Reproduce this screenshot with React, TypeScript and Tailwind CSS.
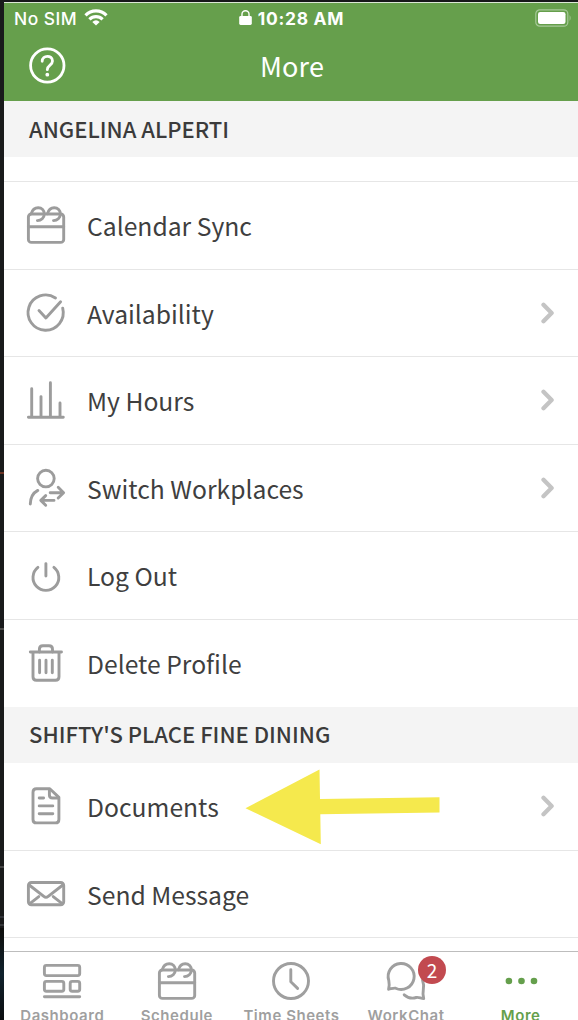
import type { ReactNode } from "react";

const humanist = "font-['Noto_Sans_CJK_SC','Noto_Sans',sans-serif]";

function Icon({ children }: { children: ReactNode }) {
  return (
    <svg
      viewBox="0 0 40 40"
      className="size-10 shrink-0 overflow-visible"
      fill="none"
      stroke="currentColor"
      strokeWidth="2.9"
      strokeLinecap="round"
      strokeLinejoin="round"
    >
      {children}
    </svg>
  );
}

const CalendarIcon = () => (
  <Icon>
    <rect x="2.4" y="9" width="35.3" height="28.4" rx="3" />
    <path d="M2.4 21.7H37.7" />
    <path d="M5.2 8.8C6.4 4.5 9 2.7 12.2 2.7C15.8 2.7 18.3 5.6 18.3 9C18.3 12.8 15.2 15.6 11.4 15.6" />
    <path d="M21.4 8.8C22.6 4.5 25 2.7 28.2 2.7C31.8 2.7 34.4 5.6 34.4 9C34.4 12.8 31.3 15.6 27.5 15.6" />
  </Icon>
);

const CheckIcon = () => (
  <Icon>
    <path d="M29.5 5A17.6 17.6 0 1 0 36.7 15.2" />
    <path d="M13 17.6L19.9 24.9L34.6 8.8" />
  </Icon>
);

const BarsIcon = () => (
  <Icon>
    <path d="M2.4 37.2H37.3M5.7 36V8.8M15 36V16.6M24.4 36V2.7M34 36V23" />
  </Icon>
);

const SwitchIcon = () => (
  <Icon>
    <circle cx="19.9" cy="10.6" r="8.3" />
    <path d="M4.3 36C4.5 29.5 7.3 24.8 11.8 22.4" />
    <path d="M24.2 24.7H37.4M32.2 19.3L37.6 24.7L32.2 30" />
    <path d="M28 32.4H15M19.7 27.6L14.8 32.4L19.7 37.2" />
  </Icon>
);

const PowerIcon = () => (
  <Icon>
    <path d="M11.9 11.4A12.9 12.9 0 1 0 27.9 11.4M19.9 7.6V20" />
  </Icon>
);

const TrashIcon = () => (
  <Icon>
    <path d="M4.3 9H35.5M7 9.5V33.8Q7 37.3 10.5 37.3H29.5Q33 37.3 33 33.8V9.5" />
    <path d="M13.4 9V6.2Q13.4 2.7 16.9 2.7H23Q26.5 2.7 26.5 6.2V9" />
    <path d="M13.6 17.2V29.8M20 17.2V29.8M26.3 17.2V29.8" />
  </Icon>
);

const DocumentIcon = () => (
  <Icon>
    <path d="M23.8 2.8H10.5Q7 2.8 7 6.3V33.4Q7 36.9 10.5 36.9H29.4Q32.9 36.9 32.9 33.4V11.4Z" />
    <path d="M23.4 3.5V9Q23.4 12 26.4 12H32M13.2 12H17.6M13.2 19.9H26.8M13.2 27.7H26.8" />
  </Icon>
);

const EnvelopeIcon = () => (
  <Icon>
    <rect x="2.4" y="8.5" width="35.3" height="22.3" rx="3" />
    <path d="M3.2 11L17.8 22.4Q20 24.2 22.2 22.4L36.8 11M3.8 29.6L12.8 22.6M36.2 29.6L27.2 22.6" />
  </Icon>
);

const DashboardIcon = () => (
  <Icon>
    <rect x="2.4" y="4.4" width="35.3" height="10.2" rx="2" />
    <rect x="2.4" y="20.4" width="19.4" height="9.8" rx="2" />
    <rect x="28.2" y="20.4" width="9.5" height="9.8" rx="2" />
    <path d="M2.4 35.8H37.7" />
  </Icon>
);

const ClockIcon = () => (
  <Icon>
    <circle cx="20" cy="20" r="17.5" />
    <path d="M19.8 8.8V20.8L26.6 27.4" />
  </Icon>
);

const ChatIcon = () => (
  <Icon>
    <path d="M2.6 28.2C3.7 24.5 3.4 22.6 2.8 19.5A13 13 0 1 1 9.6 27.2C7.5 26.8 5.2 27.8 2.6 28.2Z" />
    <path d="M18.2 33.8C22 37.2 26.3 37.7 30.2 36.5C32.6 36 34.6 37.3 37.7 37.6C36.8 34.2 36.7 31.9 37.3 29C37.9 26 37.8 22.5 36.5 19" />
  </Icon>
);

const MoreIcon = () => (
  <Icon>
    <g fill="currentColor" stroke="none">
      <circle cx="7.9" cy="20" r="3.3" />
      <circle cx="20.5" cy="20" r="3.3" />
      <circle cx="33" cy="20" r="3.3" />
    </g>
  </Icon>
);

const Chevron = () => (
  <svg viewBox="0 0 14 22" className="ml-auto h-[22px] w-[14px] text-[#c4c4c4]" fill="none" stroke="currentColor" strokeWidth="4.3" strokeLinecap="round" strokeLinejoin="round">
    <path d="M2.5 2.8L10.6 11L2.5 19.2" />
  </svg>
);

function SectionTitle({ children }: { children: ReactNode }) {
  return (
    <h2 className={`flex h-14 shrink-0 items-center bg-[#f4f4f4] pb-[3px] pl-[25px] text-[22px] font-medium leading-none text-[#3b3b3b] ${humanist}`}>
      {children}
    </h2>
  );
}

type RowProps = { icon: ReactNode; label: string; chevron?: boolean; first?: boolean; children?: ReactNode };

function Row({ icon, label, chevron, first, children }: RowProps) {
  return (
    <li className={`relative flex h-[87.6px] items-center border-[#e6e6e6] pl-[22px] pr-[23px] text-[#9c9c9c] ${first ? "" : "border-t"}`}>
      {icon}
      <span className={`ml-[21px] text-[24.7px] leading-none text-[#3f3f3f] ${humanist}`}>{label}</span>
      {chevron && <Chevron />}
      {children}
    </li>
  );
}

function Tab({ icon, label, active, badge }: { icon: ReactNode; label: string; active?: boolean; badge?: number }) {
  return (
    <div className={`flex flex-1 flex-col items-center pt-[9px] ${active ? "text-[#659f4c]" : "text-[#9f9f9f]"}`}>
      <div className="relative">
        {icon}
        {badge !== undefined && (
          <span className={`absolute -top-[5px] left-[32px] flex size-7 items-center justify-center rounded-full bg-[#c24a50] pb-[2px] text-[19px] leading-none text-white ${humanist}`}>
            {badge}
          </span>
        )}
      </div>
      <span className="mt-[5px] whitespace-nowrap text-[15px] font-semibold leading-5 tracking-[0.55px]">{label}</span>
    </div>
  );
}

function DesktopEdge() {
  return (
    <div className="flex w-1 shrink-0 flex-col bg-[#191a1b]">
      <div className="mt-[472px] h-[2px] bg-[#6b3324]" />
      <div className="mt-[154px] h-[2px] bg-[#4c4c4a]" />
      <div className="mt-[236px] h-[2px] bg-[#444444]" />
      <div className="mt-[48px] h-[2px] bg-[#303238]" />
      <div className="mt-[6px] h-[2px] bg-[#35373a]" />
      <div className="mt-[2px] flex-1 bg-linear-to-b from-[#0d0d0c] via-[#10222d] to-[#0b0d10]" />
    </div>
  );
}

export default function App() {
  return (
    <div className="flex h-[1020px] w-[578px] overflow-hidden bg-white font-[Inter,sans-serif]">
      <DesktopEdge />
      <div className="flex w-[574px] flex-col border-t-2 border-[#17181a]">
        <header className="flex h-[99px] shrink-0 flex-col border-t border-[#dce8d6] bg-[#669f4c] text-white">
          <div className="grid h-8 grid-cols-[1fr_auto_1fr] items-center pl-[10px] pr-[6px]">
            <div className="flex items-center gap-[7px] text-[17.4px] font-medium tracking-[0.5px]">
              No SIM
              <svg viewBox="0 0 24 17" className="mb-[2px] h-[17px] w-6" fill="none" stroke="currentColor" strokeWidth="3.2">
                <path d="M1.5 6.3C7.3.5 16.7.5 22.5 6.3M5.4 10.3C9.2 6.6 14.8 6.6 18.6 10.3" />
                <path d="M12 16.5L8.3 12.9Q12 9.8 15.7 12.9Z" fill="currentColor" stroke="none" />
              </svg>
            </div>
            <div className="mr-[3px] flex items-center gap-[6px] text-[17.4px] font-bold tracking-[0.75px]">
              <svg viewBox="0 0 14 17" className="mb-[3px] h-[17px] w-[13px]">
                <rect x="0.2" y="7" width="13.6" height="9.5" rx="1.5" fill="currentColor" />
                <path d="M3.2 8V5A3.8 3.8 0 0 1 10.8 5V8" fill="none" stroke="currentColor" strokeWidth="1.5" />
              </svg>
              10:28 AM
            </div>
            <svg viewBox="0 0 37 18" className="mb-[2px] h-[18px] w-[37px] justify-self-end">
              <rect x="0.8" y="0.8" width="32" height="16.4" rx="4" fill="none" stroke="#a6c998" strokeWidth="1.2" />
              <rect x="3" y="3" width="27.5" height="12" rx="2.2" fill="currentColor" />
              <path d="M34.6 6Q36.6 9 34.6 12Z" fill="#a6c998" />
            </svg>
          </div>
          <div className="grid h-[61px] grid-cols-[1fr_auto_1fr] items-center pl-[25px] pr-[23px]">
            <svg viewBox="0 0 37 37" className="size-[37px]" fill="none" stroke="currentColor" strokeWidth="2.8" strokeLinecap="round">
              <circle cx="18.3" cy="18.5" r="16.7" />
              <path d="M13.2 14.3C13.2 7.7 23.5 7.7 23.5 14C23.5 18.2 18.3 18 18.3 22.7" />
              <circle cx="18.3" cy="27.7" r="1.9" fill="currentColor" stroke="none" />
            </svg>
            <h1 className={`pb-px text-[27px] leading-none tracking-[0.2px] ${humanist}`}>More</h1>
          </div>
        </header>

        <main className="h-[850px] shrink-0 overflow-hidden">
          <SectionTitle>ANGELINA ALPERTI</SectionTitle>
          <ul className="pt-6">
            <Row icon={<CalendarIcon />} label="Calendar Sync" />
            <Row icon={<CheckIcon />} label="Availability" chevron />
            <Row icon={<BarsIcon />} label="My Hours" chevron />
            <Row icon={<SwitchIcon />} label="Switch Workplaces" chevron />
            <Row icon={<PowerIcon />} label="Log Out" />
            <Row icon={<TrashIcon />} label="Delete Profile" />
          </ul>
          <SectionTitle>SHIFTY'S PLACE FINE DINING</SectionTitle>
          <ul className="h-[175px] border-b border-[#e6e6e6]">
            <Row icon={<DocumentIcon />} label="Documents" chevron first>
              <svg viewBox="0 0 196 76" className="absolute left-[241px] top-[6px] h-[76px] w-[196px]" fill="#f5e94d">
                <path d="M.5 39.3L74.5.5L75 30L194.5 28.3V43.5L75.3 45.3L75.8 75.3Z" />
              </svg>
            </Row>
            <Row icon={<EnvelopeIcon />} label="Send Message" />
          </ul>
        </main>

        <nav className="flex h-[69px] shrink-0 border-t border-[#bdbdbd] bg-white pl-px">
          <Tab icon={<DashboardIcon />} label="Dashboard" />
          <Tab icon={<CalendarIcon />} label="Schedule" />
          <Tab icon={<ClockIcon />} label="Time Sheets" />
          <Tab icon={<ChatIcon />} label="WorkChat" badge={2} />
          <Tab icon={<MoreIcon />} label="More" active />
        </nav>
      </div>
    </div>
  );
}
